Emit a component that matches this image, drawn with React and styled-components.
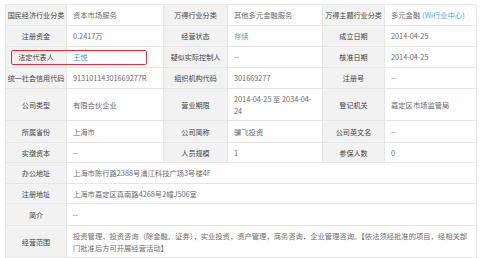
import styled, {createGlobalStyle} from "styled-components"

const GlobalStyle = createGlobalStyle`
  html, body {
    margin: 0;
    padding: 0;
    background: #ffffff;
  }
  body {
    font-family: "Noto Sans CJK SC", "Noto Sans", sans-serif;
  }
`

const ROW_HEIGHTS = [21, 21, 21, 21, 32, 22, 20, 21, 20, 22, 32]

const LinkText = styled.span`
  color: #4ba3dd;
  margin-left: 2px;
`

const StatusText = styled.span`
  color: #4ea882;
`

const PersonText = styled.span`
  color: #3c94cf;
`

// the term wraps after "2034-04-" in the source page
const Period = styled.span`
  display: inline-block;
  max-width: 80px;
`

const rows = [
    [
        ["国民经济行业分类", "资本市场服务"],
        ["万得行业分类", "其他多元金融服务"],
        ["万得主题行业分类", <>多元金融 <LinkText>(Wi行业中心)</LinkText></>],
    ],
    [
        ["注册资金", "0.2417万"],
        ["经营状态", <StatusText>存续</StatusText>],
        ["成立日期", "2014-04-25"],
    ],
    [
        ["法定代表人", <PersonText>王悦</PersonText>],
        ["疑似实际控制人", "--"],
        ["核准日期", "2014-04-25"],
    ],
    [
        ["统一社会信用代码", "91310114301669277R"],
        ["组织机构代码", "301669277"],
        ["注册号", "--"],
    ],
    [
        ["公司类型", "有限合伙企业"],
        ["营业期限", <Period>2014-04-25 至 2034-04-24</Period>],
        ["登记机关", "嘉定区市场监管局"],
    ],
    [
        ["所属省份", "上海市"],
        ["公司简称", "骥飞投资"],
        ["公司英文名", "--"],
    ],
    [
        ["实缴资本", "--"],
        ["人员规模", "1"],
        ["参保人数", "0"],
    ],
]

const wideRows = [
    ["办公地址", "上海市陈行路2388号浦江科技广场3号楼4F"],
    ["注册地址", "上海市嘉定区真南路4268号2幢J506室"],
    ["简介", "--"],
    ["经营范围", "投资管理，投资咨询（除金融、证券），实业投资，资产管理，商务咨询，企业管理咨询。【依法须经批准的项目，经相关部门批准后方可开展经营活动】"],
]

const Page = styled.div`
  width: 480px;
  height: 258px;
  overflow: hidden;
  padding: 4px 0 0 5px;
  box-sizing: border-box;
`

const TableWrapper = styled.div`
  position: relative;
  width: 471px;
`

const InfoGrid = styled.div`
  display: grid;
  grid-template-columns: 61px 97px 64px 95px 62px 92px;
  border-top: 1px solid #e6e6e6;
  border-left: 1px solid #e6e6e6;
  font-size: 7.3px;
`

const Label = styled.div`
  display: flex;
  align-items: center;
  justify-content: center;
  background-color: #f2f2f2;
  color: #444444;
  font-size: 7.1px;
  border-right: 1px solid #e6e6e6;
  border-bottom: 1px solid #e6e6e6;
  box-sizing: border-box;
  white-space: nowrap;
  overflow: hidden;
`

const Value = styled.div`
  display: flex;
  align-items: center;
  padding: 0 2px 0 6px;
  background-color: #ffffff;
  color: #6a6a6a;
  border-right: 1px solid #e6e6e6;
  border-bottom: 1px solid #e6e6e6;
  box-sizing: border-box;
  line-height: 12px;
  overflow: hidden;
  grid-column: ${props => props.$wide ? "span 5" : "auto"};
`

const Highlight = styled.div`
  position: absolute;
  left: 6px;
  top: 46px;
  width: 136px;
  height: 15px;
  border: 1.5px solid #d7373e;
  border-radius: 2px;
  box-sizing: border-box;
  pointer-events: none;
`

export default function App() {
    return (
        <Page>
            <GlobalStyle/>
            <TableWrapper>
                <InfoGrid style={{gridTemplateRows: ROW_HEIGHTS.map(h => `${h}px`).join(" ")}}>
                    {rows.map((row, i) => row.map(([label, value], j) => [
                        <Label key={`l-${i}-${j}`}>{label}</Label>,
                        <Value key={`v-${i}-${j}`}>{value}</Value>,
                    ]))}
                    {wideRows.map(([label, value]) => [
                        <Label key={`l-${label}`}>{label}</Label>,
                        <Value key={`v-${label}`} $wide>{value}</Value>,
                    ])}
                </InfoGrid>
                <Highlight/>
            </TableWrapper>
        </Page>
    )
}
